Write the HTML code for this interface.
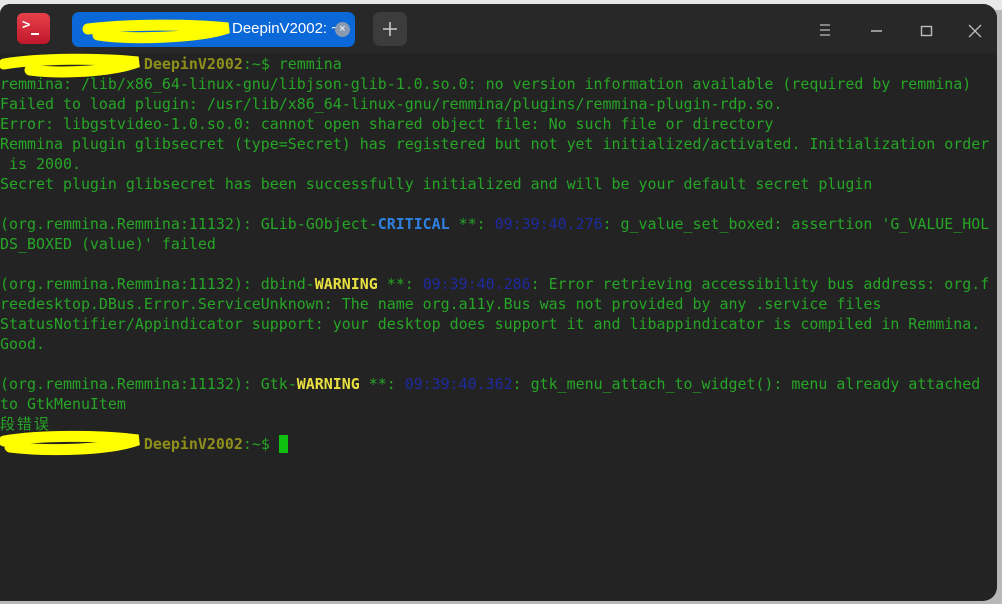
<!DOCTYPE html>
<html><head><meta charset="utf-8"><style>
html,body{margin:0;padding:0;width:1002px;height:604px;overflow:hidden;background:#b8b8b8;}
.top{position:absolute;left:0;top:0;width:1002px;height:10px;background:#e8e8e8;}
.win{position:absolute;left:0;top:4px;width:997px;height:597px;background:#232323;border-radius:10px 14px 14px 0;overflow:hidden;}
.tb{position:absolute;left:0;top:0;width:997px;height:49px;background:#282828;}
.logo{position:absolute;left:17px;top:9px;width:33px;height:31px;border-radius:6px;background:linear-gradient(#e8404a,#c0182c);color:#fff;font:bold 14px "DejaVu Sans Mono",monospace;}
.tab{position:absolute;left:72px;top:8px;width:283px;height:35px;border-radius:7px;background:#0a68d8;color:#fff;font:15px "Liberation Sans","DejaVu Sans",sans-serif;}
.plus{position:absolute;left:373px;top:8px;width:34px;height:34px;border-radius:7px;background:#3c3c3c;}
.term{position:absolute;left:0;top:50px;font-family:"DejaVu Sans Mono","Liberation Mono","Noto Sans CJK SC",monospace;font-size:14.94px;line-height:20px;color:#26a626;white-space:pre;}
.h{color:#8f8f1c;font-weight:bold}.c{color:#2f80e0;font-weight:bold}.w{color:#e8e040;font-weight:bold}.t{color:#1e2aa0}
</style></head><body>
<div class="top"></div>
<div class="win">
<div class="tb">
<div class="logo"><span style="position:absolute;left:5px;top:4px">&gt;</span><span style="position:absolute;left:14px;top:20px;width:8px;height:2px;background:#fff"></span></div>
<div class="tab"><span style="position:absolute;left:160px;top:8px">DeepinV2002: ~</span>
<span style="position:absolute;left:263px;top:10px;width:15px;height:15px;border-radius:50%;background:#8a9ab0;color:#fff;font-size:11px;line-height:15px;text-align:center">×</span></div>
<div class="plus"><svg width="34" height="34"><path d="M17 10v14M10 17h14" stroke="#ccc" stroke-width="1.6"/></svg></div>
<svg style="position:absolute;left:810px;top:18px" width="180" height="20">
<path d="M10 3h10M10 8h10M10 13h10" stroke="#bbb" stroke-width="1.2"/>
<path d="M61 9h11" stroke="#bbb" stroke-width="1.4"/>
<rect x="111.5" y="4.5" width="10" height="9" fill="none" stroke="#bbb" stroke-width="1.4"/>
<path d="M159 3l12 12M171 3l-12 12" stroke="#bbb" stroke-width="1.3"/>
</svg>
</div>
<div class="term"><span class="h">                DeepinV2002</span>:~$ remmina
remmina: /lib/x86_64-linux-gnu/libjson-glib-1.0.so.0: no version information available (required by remmina)
Failed to load plugin: /usr/lib/x86_64-linux-gnu/remmina/plugins/remmina-plugin-rdp.so.
Error: libgstvideo-1.0.so.0: cannot open shared object file: No such file or directory
Remmina plugin glibsecret (type=Secret) has registered but not yet initialized/activated. Initialization order
 is 2000.
Secret plugin glibsecret has been successfully initialized and will be your default secret plugin

(org.remmina.Remmina:11132): GLib-GObject-<span class="c">CRITICAL</span> **: <span class="t">09:39:40.276</span>: g_value_set_boxed: assertion 'G_VALUE_HOL
DS_BOXED (value)' failed

(org.remmina.Remmina:11132): dbind-<span class="w">WARNING</span> **: <span class="t">09:39:40.286</span>: Error retrieving accessibility bus address: org.f
reedesktop.DBus.Error.ServiceUnknown: The name org.a11y.Bus was not provided by any .service files
StatusNotifier/Appindicator support: your desktop does support it and libappindicator is compiled in Remmina.
Good.

(org.remmina.Remmina:11132): Gtk-<span class="w">WARNING</span> **: <span class="t">09:39:40.362</span>: gtk_menu_attach_to_widget(): menu already attached
to GtkMenuItem
<span style="font-family:'Noto Sans CJK SC',sans-serif;letter-spacing:2px">段错误</span>
<span class="h">                DeepinV2002</span>:~$ <span style="display:inline-block;width:9px;height:18px;background:#10c010;vertical-align:-4px"></span></div>
</div>
<svg style="position:absolute;left:0;top:0" width="400" height="460">
<path d="M88 29 C130 24,190 24,228 28 C200 38,130 40,98 35" stroke="#ffff00" stroke-width="11" fill="none" stroke-linecap="round"/>
<path d="M4 64 C40 58,100 58,138 62 C110 72,60 74,30 70" stroke="#ffff00" stroke-width="11" fill="none" stroke-linecap="round"/>
<path d="M4 441 C40 435,100 435,138 440 C110 450,50 452,10 447" stroke="#ffff00" stroke-width="11" fill="none" stroke-linecap="round"/>
</svg>
</body></html>
